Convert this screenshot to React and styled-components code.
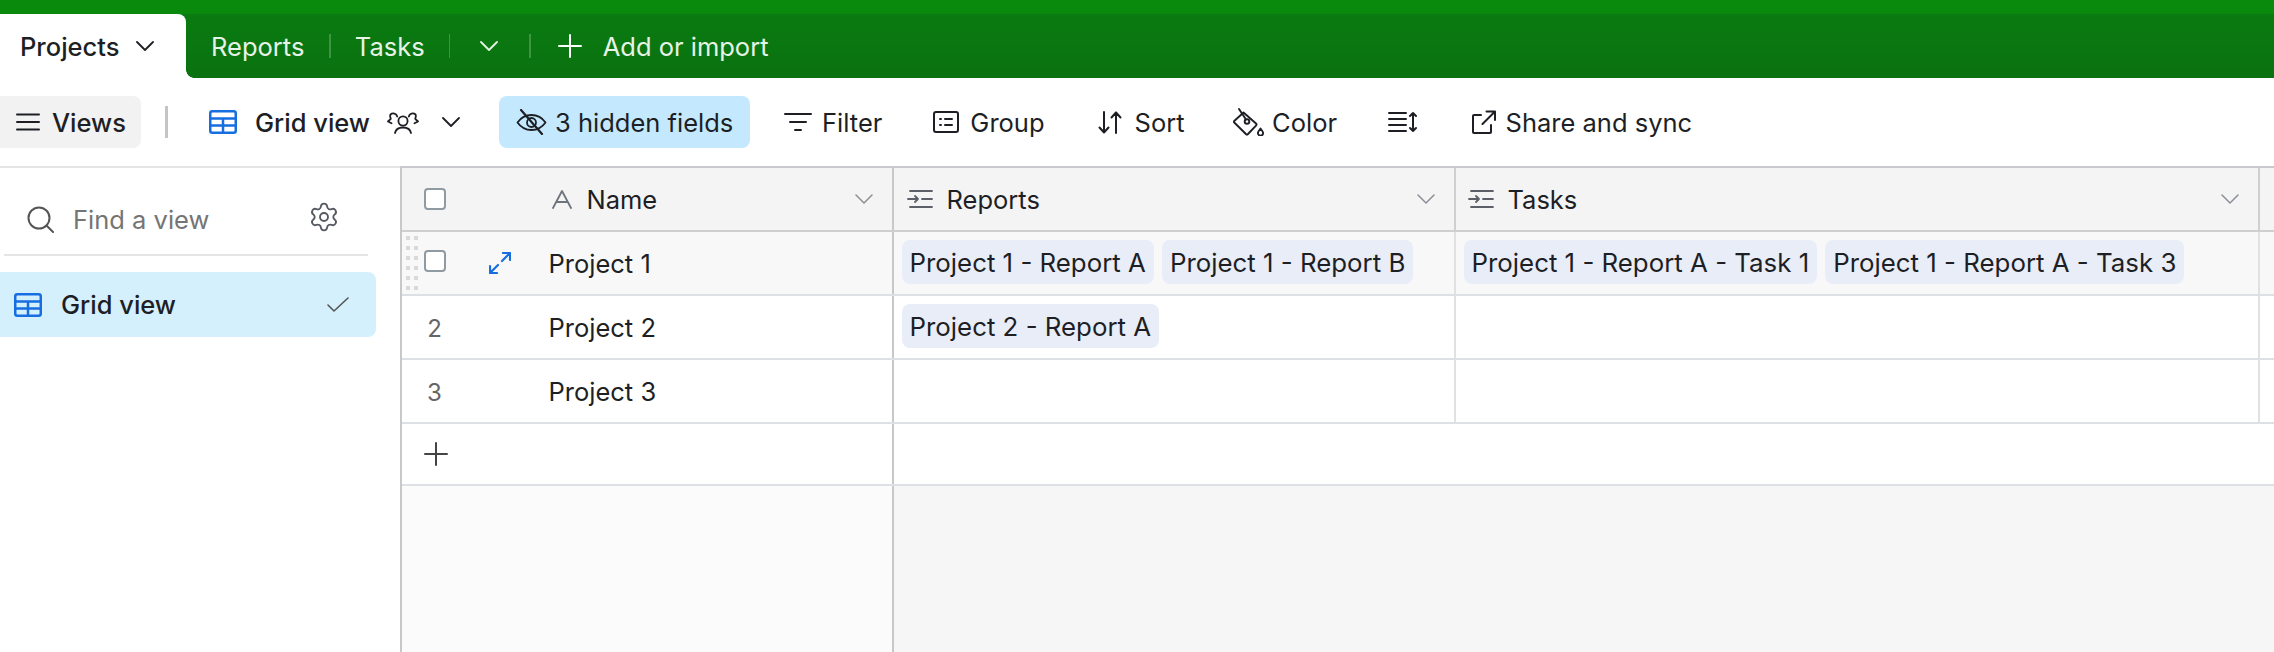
import React from "react";
import styled, { createGlobalStyle } from "styled-components";
import { Settings } from "lucide-react";

const Global = createGlobalStyle`
  html, body { margin: 0; padding: 0; background: #fff; }
  body { font-family: Inter, "Liberation Sans", sans-serif; color: #1d1f25; -webkit-font-smoothing: antialiased; }
  * { box-sizing: border-box; }
`;

const Page = styled.div`
  width: 2274px;
  height: 652px;
  display: flex;
  flex-direction: column;
  overflow: hidden;
  font-size: 25.5px;
`;

const TabBar = styled.div`
  height: 78px;
  flex: none;
  padding-top: 14px;
  display: flex;
  align-items: stretch;
  background: linear-gradient(to bottom, #0a8a0d 0, #0a8a0d 14px, #0a7b10 14px, #0a7210 100%);
`;

const ActiveTab = styled.div`
  width: 186px;
  flex: none;
  background: #fff;
  border-radius: 0 8px 0 0;
  display: flex;
  align-items: center;
  padding-left: 20px;
  gap: 17px;
  font-weight: 450;
  position: relative;
  &::after {
    content: "";
    position: absolute;
    left: 100%;
    bottom: 0;
    width: 8px;
    height: 8px;
    background: radial-gradient(circle at 100% 0, transparent 7.5px, #fff 8px);
  }
`;

const TabRow = styled.div`
  display: flex;
  align-items: center;
  color: #e6f3e6;
  font-weight: 400;
  padding-left: 25px;
`;

const TabLabel = styled.span`
  display: flex;
  margin-left: ${(p) => p.$ml || 0}px;
  margin-right: ${(p) => p.$mr || 0}px;
`;

const TabDivider = styled.i`
  display: block;
  width: 1.5px;
  height: 24px;
  background: rgba(255, 255, 255, 0.22);
`;

const Toolbar = styled.div`
  height: 88px;
  flex: none;
  display: flex;
  align-items: center;
`;

const ViewsButton = styled.div`
  width: 141px;
  height: 52px;
  flex: none;
  background: #f2f2f2;
  border-radius: 0 8px 8px 0;
  display: flex;
  align-items: center;
  padding-left: 16px;
  gap: 12px;
  font-weight: 450;
`;

const ToolbarDivider = styled.i`
  display: block;
  width: 2.5px;
  height: 32px;
  margin-left: 24px;
  background: #c4c4c4;
`;

const ToolItem = styled.div`
  display: flex;
  align-items: center;
  flex: none;
  font-weight: ${(p) => p.$weight || 400};
  margin-left: ${(p) => p.$ml || 0}px;
  gap: ${(p) => p.$gap ?? 11}px;
`;

const HiddenButton = styled(ToolItem)`
  width: 251px;
  height: 52px;
  background: #c4e9fe;
  border-radius: 8px;
  padding-left: 17px;
`;

const Body = styled.div`
  flex: 1;
  display: flex;
  min-height: 0;
`;

const Sidebar = styled.div`
  width: 400px;
  flex: none;
  border-top: 2px solid #e5e5e5;
`;

const SearchRow = styled.div`
  height: 88px;
  margin: 0 32px 0 4px;
  padding: 16px 0 0 23px;
  display: flex;
  align-items: center;
  gap: 19px;
  border-bottom: 2px solid #e5e5e5;
  color: #757575;
  svg:last-child { margin-left: auto; margin-right: 28px; margin-top: -5px; }
`;

const ViewItem = styled.div`
  width: 376px;
  height: 65px;
  margin-top: 16px;
  padding-left: 14px;
  display: flex;
  align-items: center;
  gap: 19px;
  background: #d5f0fd;
  border-radius: 0 8px 8px 0;
  font-weight: 450;
  svg:last-child { margin-left: auto; margin-right: 27px; }
`;

const Grid = styled.div`
  flex: 1;
  display: flex;
  flex-direction: column;
  border-left: 2.5px solid #c8c8c8;
  border-top: 2px solid #c9c9cf;
  min-width: 0;
`;

const Row = styled.div`
  height: 64px;
  flex: none;
  display: grid;
  grid-template-columns: 491.5px 562px 804px 1fr;
  background: ${(p) => p.$bg || "#fff"};
  border-bottom: 2px solid ${(p) => p.$line || "#dde1e5"};
`;

const Cell = styled.div`
  display: flex;
  align-items: center;
  position: relative;
  min-width: 0;
  border-right: 2px solid ${(p) => p.$line || "#e1e1e1"};
  &:last-child { border-right: 0; }
`;

const NameCell = styled(Cell)`
  border-right-color: #c8c8c8;
`;

const Check = styled.span`
  width: 22px;
  height: 22px;
  flex: none;
  margin-left: 21.5px;
  margin-top: ${(p) => p.$mt || 0}px;
  background: #fff;
  border: 2px solid #909aa3;
  border-radius: 4px;
`;

const RowNumber = styled.span`
  width: 22px;
  margin-left: 21.5px;
  margin-top: 2px;
  flex: none;
  text-align: center;
  font-size: 24px;
  color: #666;
`;

const Grip = styled.div`
  position: absolute;
  left: 4px;
  top: 4px;
  display: grid;
  grid-template-columns: 4px 4px;
  grid-auto-rows: 4px;
  gap: 6px 4px;
  span { background: #d9d9d9; }
`;

const Expand = styled.div`
  width: 22px;
  margin-left: 43px;
  flex: none;
  display: flex;
`;

const RecordName = styled.span`
  margin-left: ${(p) => p.$ml}px;
`;

const HeaderIcon = styled.div`
  display: flex;
  flex: none;
  margin-left: ${(p) => p.$ml}px;
`;

const HeaderLabel = styled.span`
  margin-left: ${(p) => p.$ml || 14}px;
  font-weight: 400;
`;

const ColumnChevron = styled.div`
  display: flex;
  position: absolute;
  right: ${(p) => p.$r}px;
  top: 26px;
`;

const ChipCell = styled(Cell)`
  align-items: flex-start;
  padding: 8px 0 0 8px;
  gap: 8px;
`;

const Chip = styled.span`
  height: 44px;
  padding: 0 8px;
  flex: none;
  display: inline-flex;
  align-items: center;
  background: #e9edf8;
  border-radius: 8px;
  font-size: 25.85px;
`;

const AddRow = styled.div`
  height: 62px;
  flex: none;
  display: grid;
  grid-template-columns: 491.5px 1fr;
  border-bottom: 2px solid #dde1e5;
`;

const AddCell = styled.div`
  display: flex;
  align-items: center;
  padding-left: 22px;
  border-right: 2px solid #c8c8c8;
`;

const Filler = styled.div`
  flex: 1;
  display: grid;
  grid-template-columns: 491.5px 1fr;
  background: #f6f6f6;
`;

const FillerLeft = styled.div`
  background: #fbfbfb;
  border-right: 2px solid #c8c8c8;
`;

const Glyph = ({ w, h, children, color = "#1d1f25", sw = 2 }) => (
  <svg width={w} height={h} viewBox={`0 0 ${w} ${h}`} fill="none" stroke={color} strokeWidth={sw} strokeLinecap="round" strokeLinejoin="round" style={{ flex: "none" }}>
    {children}
  </svg>
);

const Chevron = ({ w = 18, h = 10, color, sw = 1.8 }) => (
  <Glyph w={w} h={h} color={color} sw={sw}>
    <polyline points={`1,1 ${w / 2},${h - 1} ${w - 1},1`} />
  </Glyph>
);

const GridIcon = () => (
  <Glyph w={28} h={24} color="#166ee1" sw={2.5}>
    <rect x="1.25" y="1.25" width="25.5" height="21.5" rx="2" />
    <path d="M1.5 8.5H26.5M1.5 15.5H26.5M14 8.5V22.5" />
  </Glyph>
);

const MenuIcon = () => (
  <Glyph w={24} h={18} sw={2}>
    <path d="M1 1.5H23M1 9H23M1 16.5H23" />
  </Glyph>
);

const UsersIcon = () => (
  <Glyph w={32} h={24} sw={1.8}>
    <circle cx="16" cy="11" r="4.6" />
    <path d="M8 23c.8-4 4-5.5 8-5.5s7.2 1.500 8 5.500" />
    <path d="M10.200 6.500A4 4 0 0 0 3.500 4.500c-.8 1.300-.2 3 .3 4.300L1 11.500l3.500 1.800" />
    <path d="M21.800 6.500a4 4 0 0 1 6.700-2c.8 1.300.2 3-.3 4.300l2.800 2.700-3.500 1.800" />
  </Glyph>
);

const EyeOffIcon = () => (
  <Glyph w={31} h={26} sw={1.8}>
    <path d="M1.500 13.500C5 8.500 10 6 15.500 6s10.500 2.500 14 7.500c-3.500 5-8.500 7.500-14 7.500s-10.500-2.500-14-7.500Z" />
    <circle cx="15.500" cy="13.500" r="4.500" />
    <path d="M5 1l21 24" strokeWidth="2.200" />
  </Glyph>
);

const FilterIcon = () => (
  <Glyph w={28} h={20} sw={2}>
    <path d="M1 2H27M6 10H22M11 18H17" />
  </Glyph>
);

const GroupIcon = () => (
  <Glyph w={26} h={22} sw={2}>
    <rect x="1" y="1" width="24" height="20" rx="2" />
    <path d="M7 8H8M12 8H19M7 14H8M12 14H19" />
  </Glyph>
);

const SortIcon = () => (
  <Glyph w={24} h={23} sw={2}>
    <path d="M6 1V21.500M1.500 16.500L6 21.500L10.500 16.500M18 22V1.500M13.500 6.500L18 1.500L22.500 6.500" />
  </Glyph>
);

const ColorIcon = () => (
  <Glyph w={32} h={28} sw={1.9}>
    <path d="M10.500 4.500L23 15.500a1.500 1.500 0 0 1 0 2.100L15 26a1.500 1.500 0 0 1-2.100 0L1.500 14.800a1.500 1.500 0 0 1 0-2.100Z" />
    <circle cx="14" cy="13.500" r="2.300" />
    <path d="M6 1L13 11.500" />
    <path d="M27.500 20.500c1.700 2.200 2.600 3.400 2.600 4.500a2.600 2.600 0 0 1-5.200 0c0-1.100.9-2.300 2.600-4.500Z" />
  </Glyph>
);

const RowHeightIcon = () => (
  <Glyph w={29} h={22} sw={2}>
    <path d="M1 2H18M1 8H18M1 14H18M1 20H18" />
    <path d="M25 2V20M22 5L25 2L28 5M22 17L25 20L28 17" />
  </Glyph>
);

const ShareIcon = () => (
  <Glyph w={24} h={24} sw={2}>
    <path d="M9 5H2a1 1 0 0 0-1 1V22a1 1 0 0 0 1 1H18a1 1 0 0 0 1-1V15" />
    <path d="M10.500 14L23 1.500M14.500 1.500H23V10" />
  </Glyph>
);

const SearchIcon = () => (
  <Glyph w={27} h={27} color="#555" sw={2}>
    <circle cx="12" cy="12" r="10.500" />
    <path d="M19.500 19.500L26 26" />
  </Glyph>
);

const CheckIcon = () => (
  <Glyph w={22} h={15} color="#555" sw={1.6}>
    <polyline points="1,8 7,14 21,1" />
  </Glyph>
);

const ExpandIcon = () => (
  <Glyph w={22} h={22} color="#166ee1" sw={2.2}>
    <path d="M13 9L21 1M14 1H21V8M9 13L1 21M8 21H1V14" />
  </Glyph>
);

const TextFieldIcon = () => (
  <Glyph w={20} h={19} color="#6e747c" sw={1.8}>
    <path d="M1 18L10 1L19 18M4.500 12H15.500" />
  </Glyph>
);

const LinkFieldIcon = () => (
  <Glyph w={26} h={20} color="#5c6169" sw={1.8}>
    <path d="M3 2H25M3 18H25M15 10H25M1 10H11M8 7L11 10L8 13" />
  </Glyph>
);

const PlusIcon = ({ s = 24, color = "#444", sw = 2 }) => (
  <Glyph w={s} h={s} color={color} sw={sw}>
    <path d={`M${s / 2} 1V${s - 1}M1 ${s / 2}H${s - 1}`} />
  </Glyph>
);

const ColChevron = () => <Chevron color="#8a8f96" sw={1.5} />;

const GRIP = Array.from({ length: 12 }, (_, i) => i);

export default function App() {
  return (
    <Page>
      <Global />
      <TabBar>
        <ActiveTab>
          Projects
          <Chevron />
        </ActiveTab>
        <TabRow>
          <TabLabel $mr={25}>Reports</TabLabel>
          <TabDivider />
          <TabLabel $ml={24} $mr={24}>Tasks</TabLabel>
          <TabDivider />
          <TabLabel $ml={30} $mr={31}><Chevron color="#e6f3e6" /></TabLabel>
          <TabDivider />
          <TabLabel $ml={27} $mr={21}><PlusIcon s={24} color="#fff" sw={2} /></TabLabel>
          <TabLabel>Add or import</TabLabel>
        </TabRow>
      </TabBar>
      <Toolbar>
        <ViewsButton>
          <MenuIcon />
          Views
        </ViewsButton>
        <ToolbarDivider />
        <ToolItem $ml={41.5} $gap={18} $weight={450}><GridIcon />Grid view</ToolItem>
        <ToolItem $ml={17}><UsersIcon /></ToolItem>
        <ToolItem $ml={23}><Chevron /></ToolItem>
        <HiddenButton $ml={39} $gap={8}><EyeOffIcon />3 hidden fields</HiddenButton>
        <ToolItem $ml={34} $gap={10}><FilterIcon />Filter</ToolItem>
        <ToolItem $ml={51} $gap={11}><GroupIcon />Group</ToolItem>
        <ToolItem $ml={53} $gap={13}><SortIcon />Sort</ToolItem>
        <ToolItem $ml={48.5} $gap={7}><ColorIcon />Color</ToolItem>
        <ToolItem $ml={51}><RowHeightIcon /></ToolItem>
        <ToolItem $ml={54.5} $gap={10}><ShareIcon />Share and sync</ToolItem>
      </Toolbar>
      <Body>
        <Sidebar>
          <SearchRow>
            <SearchIcon />
            Find a view
            <Settings size={32} color="#555a62" strokeWidth={1.4} />
          </SearchRow>
          <ViewItem>
            <GridIcon />
            Grid view
            <CheckIcon />
          </ViewItem>
        </Sidebar>
        <Grid>
          <Row $bg="#f4f4f4" $line="#cfcfcf">
            <NameCell>
              <Check />
              <HeaderIcon $ml={106}><TextFieldIcon /></HeaderIcon>
              <HeaderLabel $ml={15}>Name</HeaderLabel>
              <ColumnChevron $r={19}><ColChevron /></ColumnChevron>
            </NameCell>
            <Cell $line="#cfcfcf">
              <HeaderIcon $ml={13}><LinkFieldIcon /></HeaderIcon>
              <HeaderLabel>Reports</HeaderLabel>
              <ColumnChevron $r={19}><ColChevron /></ColumnChevron>
            </Cell>
            <Cell $line="#cfcfcf">
              <HeaderIcon $ml={12}><LinkFieldIcon /></HeaderIcon>
              <HeaderLabel>Tasks</HeaderLabel>
              <ColumnChevron $r={19}><ColChevron /></ColumnChevron>
            </Cell>
            <Cell />
          </Row>
          <Row $bg="#f8f8f8">
            <NameCell>
              <Grip>{GRIP.map((i) => <span key={i} />)}</Grip>
              <Check $mt={-4} />
              <Expand><ExpandIcon /></Expand>
              <RecordName $ml={38}>Project 1</RecordName>
            </NameCell>
            <ChipCell>
              <Chip>Project 1 - Report A</Chip>
              <Chip>Project 1 - Report B</Chip>
            </ChipCell>
            <ChipCell>
              <Chip>Project 1 - Report A - Task 1</Chip>
              <Chip>Project 1 - Report A - Task 3</Chip>
            </ChipCell>
            <Cell />
          </Row>
          <Row>
            <NameCell>
              <RowNumber>2</RowNumber>
              <RecordName $ml={103}>Project 2</RecordName>
            </NameCell>
            <ChipCell><Chip>Project 2 - Report A</Chip></ChipCell>
            <Cell />
            <Cell />
          </Row>
          <Row>
            <NameCell>
              <RowNumber>3</RowNumber>
              <RecordName $ml={103}>Project 3</RecordName>
            </NameCell>
            <Cell />
            <Cell />
            <Cell />
          </Row>
          <AddRow>
            <AddCell><PlusIcon /></AddCell>
          </AddRow>
          <Filler>
            <FillerLeft />
          </Filler>
        </Grid>
      </Body>
    </Page>
  );
}
